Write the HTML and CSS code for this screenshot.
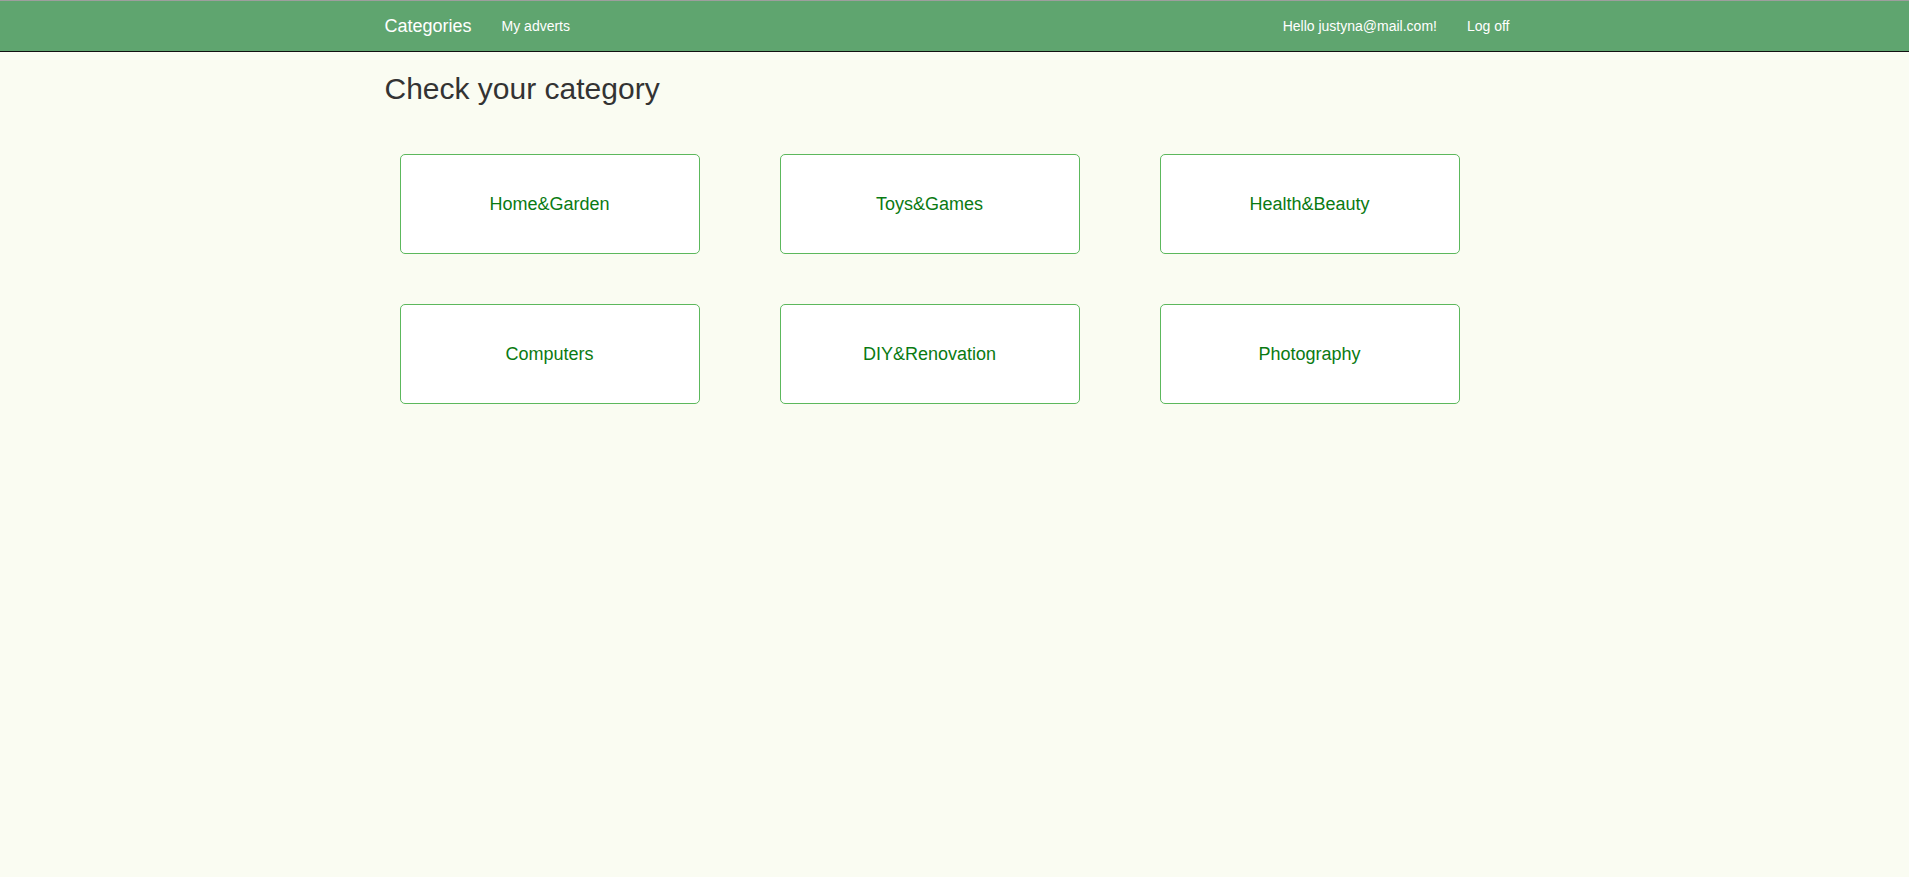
FILE: index.html
```html
<!DOCTYPE html>
<html lang="en">
<head>
<meta charset="utf-8">
<title>Check your category</title>
<link rel="stylesheet" href="styles.css">
</head>
<body>
<nav class="navbar">
  <div class="container nav-inner">
    <div class="nav-left">
      <a class="brand" href="#">Categories</a>
      <a class="nav-link" href="#">My adverts</a>
    </div>
    <div class="nav-right">
      <a class="nav-link" href="#">Hello justyna@mail.com!</a>
      <a class="nav-link" href="#">Log off</a>
    </div>
  </div>
</nav>
<main class="container body-content">
  <h2 class="title">Check your category</h2>
  <div class="grid">
    <a class="card" href="#">Home&amp;Garden</a>
    <a class="card" href="#">Toys&amp;Games</a>
    <a class="card" href="#">Health&amp;Beauty</a>
    <a class="card" href="#">Computers</a>
    <a class="card" href="#">DIY&amp;Renovation</a>
    <a class="card" href="#">Photography</a>
  </div>
</main>
</body>
</html>
```
FILE: styles.css
```css
* { box-sizing: border-box; }
html, body { margin: 0; padding: 0; }
body {
  background: #fafcf2;
  font-family: "Liberation Sans", Arial, sans-serif;
  font-size: 14px;
  line-height: 20px;
  color: #333;
}
a { text-decoration: none; }
.container {
  width: 1170px;
  margin: 0 auto;
  padding: 0 15px;
}
.navbar {
  background: #5fa56f;
  border-top: 1px solid #9e9e9e;
  border-bottom: 1px solid #111;
  height: 52px;
}
.nav-inner {
  display: flex;
  justify-content: space-between;
  height: 50px;
}
.nav-left, .nav-right { display: flex; align-items: stretch; }
.brand {
  color: #fff;
  font-size: 18px;
  line-height: 20px;
  padding: 15px 15px 15px 0;
}
.nav-link {
  color: #fff;
  font-size: 14px;
  line-height: 20px;
  padding: 15px;
}
.title {
  font-size: 30px;
  font-weight: 400;
  line-height: 33px;
  margin: 20px 0 0;
  color: #333;
}
.grid {
  display: grid;
  grid-template-columns: repeat(3, 300px);
  column-gap: 80px;
  row-gap: 50px;
  margin: 49px 0 0 15px;
}
.card {
  height: 100px;
  background: #fff;
  border: 1px solid #5cb85c;
  border-radius: 5px;
  color: #0a7a12;
  font-size: 18px;
  display: flex;
  align-items: center;
  justify-content: center;
}
```
